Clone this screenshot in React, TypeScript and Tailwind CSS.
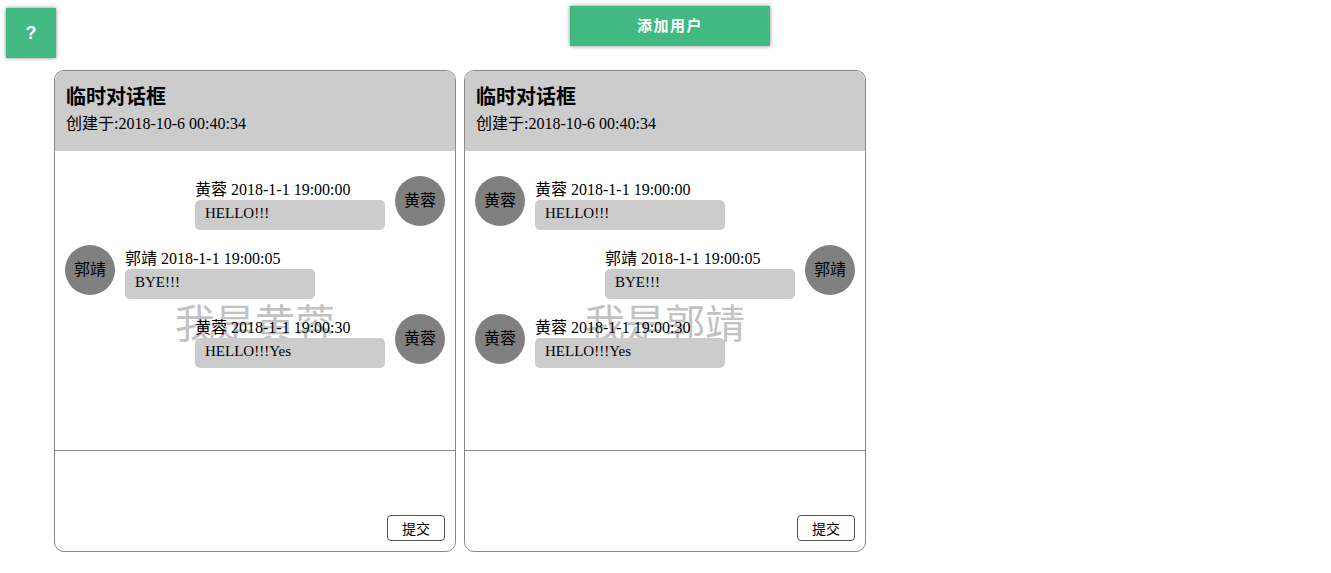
const serif = 'font-["Liberation_Serif","Noto_Sans_CJK_SC",serif]';

type Msg = { name: string; time: string; text: string; mine: boolean };

const chats: { owner: string; messages: Msg[] }[] = [
  {
    owner: '黄蓉',
    messages: [
      { name: '黄蓉', time: '2018-1-1 19:00:00', text: 'HELLO!!!', mine: true },
      { name: '郭靖', time: '2018-1-1 19:00:05', text: 'BYE!!!', mine: false },
      { name: '黄蓉', time: '2018-1-1 19:00:30', text: 'HELLO!!!Yes', mine: true },
    ],
  },
  {
    owner: '郭靖',
    messages: [
      { name: '黄蓉', time: '2018-1-1 19:00:00', text: 'HELLO!!!', mine: false },
      { name: '郭靖', time: '2018-1-1 19:00:05', text: 'BYE!!!', mine: true },
      { name: '黄蓉', time: '2018-1-1 19:00:30', text: 'HELLO!!!Yes', mine: false },
    ],
  },
];

function Avatar({ name }: { name: string }) {
  return (
    <div className="flex h-[50px] w-[50px] shrink-0 items-center justify-center rounded-full bg-[#808080] text-[16px] text-black">
      {name}
    </div>
  );
}

function Message({ msg }: { msg: Msg }) {
  return (
    <div className={`flex gap-[10px] ${msg.mine ? 'flex-row-reverse' : ''}`}>
      <Avatar name={msg.name} />
      <div className="w-[190px]">
        <div className="h-[24px] pt-[2px] text-[16px] leading-[24px]">
          {msg.name} {msg.time}
        </div>
        <div className="h-[30px] rounded-[5px] bg-[#cccccc] pl-[10px] text-[15px] leading-[27px]">
          {msg.text}
        </div>
      </div>
    </div>
  );
}

function ChatBox({ owner, messages }: { owner: string; messages: Msg[] }) {
  return (
    <div className="flex h-[482px] w-[402px] flex-col overflow-hidden rounded-[10px] border border-[#888888] bg-white">
      <div className="h-[80px] shrink-0 bg-[#cccccc] px-[11px] pt-[10px]">
        <div className='font-["Noto_Sans_CJK_SC",sans-serif] text-[20px] font-bold leading-[30px]'>临时对话框</div>
        <div className="pt-[1px] text-[16px] leading-[24px]">创建于:2018-10-6 00:40:34</div>
      </div>
      <div className="relative h-[300px] shrink-0 border-b border-[#888888] px-[10px] pt-[25px]">
        <div className='pointer-events-none absolute left-1/2 top-1/2 -translate-x-1/2 whitespace-nowrap font-["Noto_Sans_CJK_SC",sans-serif] text-[40px] leading-none text-[#c2c2c2]'>
          我是{owner}
        </div>
        <div className="relative flex flex-col gap-[15px]">
          {messages.map((m, i) => (
            <Message key={i} msg={m} />
          ))}
        </div>
      </div>
      <div className="flex flex-1 items-end justify-end p-[10px]">
        <button className='h-[26px] w-[58px] rounded-[4px] border border-[#555555] bg-white font-["Noto_Sans_CJK_SC",sans-serif] text-[14px] text-black'>
          提交
        </button>
      </div>
    </div>
  );
}

export default function App() {
  return (
    <div className={`relative h-[573px] w-full bg-white text-black ${serif}`}>
      <button className='absolute left-[6px] top-[8px] flex h-[50px] w-[50px] items-center justify-center bg-[#42b883] font-["Liberation_Sans",sans-serif] text-[18px] font-bold text-white shadow-[0_0_4px_#888]'>
        ?
      </button>
      <div className="pl-[570px] pt-[6px]">
        <button className='h-[40px] w-[200px] bg-[#42b883] pb-[2px] font-["Noto_Sans_CJK_SC",sans-serif] text-[15px] font-bold tracking-[1.5px] text-white shadow-[0_0_4px_#888]'>
          添加用户
        </button>
      </div>
      <div className="mt-[24px] flex gap-[8px] pl-[54px]">
        {chats.map((c, i) => (
          <ChatBox key={i} owner={c.owner} messages={c.messages} />
        ))}
      </div>
    </div>
  );
}
